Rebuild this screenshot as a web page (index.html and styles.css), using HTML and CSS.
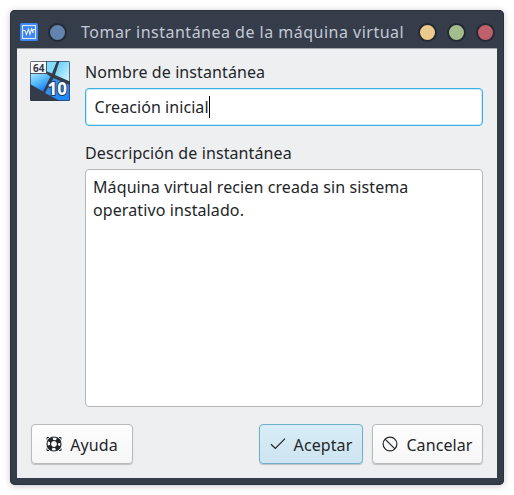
FILE: index.html
```html
<!DOCTYPE html>
<html lang="es">
<head>
<meta charset="utf-8">
<title>Tomar instantánea de la máquina virtual</title>
<link rel="stylesheet" href="styles.css">
</head>
<body>
<div class="window">
  <header class="titlebar">
    <svg class="app-icon" width="18" height="18" viewBox="0 0 18 18">
      <rect width="18" height="18" rx="1.5" fill="#3b84f2"/>
      <rect x="2.5" y="2.5" width="13" height="13" fill="none" stroke="#d5e6ff" stroke-width="1.2"/>
      <path d="M3 7.500h2l1.500 4L8.500 6l1.500 5.500L11.500 6l1.500 4V6.500h2" fill="none" stroke="#e4efff" stroke-width="1.100"/>
    </svg>
    <span class="dot blue"></span>
    <h1 class="title">Tomar instantánea de la máquina virtual</h1>
    <div class="controls">
      <span class="dot yellow"></span>
      <span class="dot green"></span>
      <span class="dot red"></span>
    </div>
  </header>
  <main class="content">
    <div class="form">
      <svg class="os-icon" width="40" height="40" viewBox="0 0 40 40">
        <defs>
          <linearGradient id="sky" x1="0" y1="0" x2=".6" y2="1">
            <stop offset="0" stop-color="#b4ecff"/>
            <stop offset=".5" stop-color="#59bdf8"/>
            <stop offset="1" stop-color="#187df5"/>
          </linearGradient>
          <linearGradient id="pane" x1="0" y1="0" x2="1" y2="1">
            <stop offset="0" stop-color="#58c6f8"/>
            <stop offset="1" stop-color="#d6faff"/>
          </linearGradient>
          <linearGradient id="deep" x1="0" y1="0" x2="1" y2="1">
            <stop offset="0" stop-color="#3f95e6"/>
            <stop offset="1" stop-color="#1685ff"/>
          </linearGradient>
          <clipPath id="tile"><rect width="40" height="40" rx="1.500"/></clipPath>
        </defs>
        <g clip-path="url(#tile)">
          <rect width="40" height="40" fill="#343b49"/>
          <path d="M0 12h15l5.500 3.500L13 30.500 0 23z" fill="url(#sky)"/>
          <path d="M16 0h11l-5 12.500-6-2.500z" fill="#82dcfc"/>
          <path d="M29.500 0H40v20.500l-15-6.500z" fill="url(#pane)"/>
          <path d="M23.500 17L40 24v16H30L15 32z" fill="url(#deep)"/>
          <rect width="16" height="12.500" fill="#fafafa"/>
          <path d="M0 12.500h16.500V0" fill="none" stroke="#4b5563"/>
          <rect x=".5" y=".5" width="39" height="39" rx="1" fill="none" stroke="#303846" stroke-opacity=".7"/>
        </g>
        <text class="bits" x="3" y="10.500">64</text>
        <text class="version" x="17.500" y="33.500">10</text>
      </svg>
      <div class="fields">
        <label class="label" for="name">Nombre de instantánea</label>
        <div class="input" id="name">Creación inicial<span class="caret"></span></div>
        <label class="label second" for="desc">Descripción de instantánea</label>
        <div class="textarea" id="desc">Máquina virtual recien creada sin sistema<br>operativo instalado.</div>
      </div>
    </div>
    <footer class="actions">
      <button class="button help">
        <svg width="16" height="16" viewBox="0 0 16 16" fill="none" stroke="#232629">
          <circle cx="8" cy="8" r="5.200" stroke-width="4" stroke-dasharray="4.600 3.568" stroke-dashoffset="-1.784"/>
          <circle cx="8" cy="8" r="7" stroke-width="1.200"/>
          <circle cx="8" cy="8" r="3.500" stroke-width="1.200"/>
          <path d="M1 3.500V1.500h2M13 1.500h2v2M1 12.500v2h2M13 14.500h2v-2"/>
        </svg>
        <span>Ayuda</span>
      </button>
      <button class="button accept">
        <svg width="16" height="16" viewBox="0 0 16 16" fill="none" stroke="#232629" stroke-width="1.200">
          <path d="M1 8.300l4.300 4.200L15 2.700"/>
        </svg>
        <span>Aceptar</span>
      </button>
      <button class="button cancel">
        <svg width="16" height="16" viewBox="0 0 16 16" fill="none" stroke="#232629" stroke-width="1.200">
          <circle cx="8" cy="8" r="6.900"/>
          <path d="M3.100 3.100l9.800 9.800"/>
        </svg>
        <span>Cancelar</span>
      </button>
    </footer>
  </main>
</div>
</body>
</html>
```
FILE: styles.css
```css
* { box-sizing: border-box; }

body {
  margin: 0;
  padding: 10px;
  height: 495px;
  background: #fff;
  color: #232629;
  font: 16px/23px "Noto Sans", sans-serif;
  letter-spacing: .1px;
}

.window {
  display: flex;
  flex-direction: column;
  width: 494px;
  height: 475px;
  padding: 0 7px 7px;
  background: #353c4a;
  border-radius: 5px;
  box-shadow: inset 0 0 0 1px #2b313e, 0 1px 7px rgba(0, 0, 0, .22);
}

.titlebar {
  display: flex;
  align-items: center;
  height: 38px;
  padding: 6px 2px 0 3px;
}

.app-icon { flex: none; }

.dot {
  flex: none;
  width: 19px;
  height: 19px;
  border: 2px solid #252a34;
  border-radius: 50%;
}

.blue { margin-left: 10px; background: #6083b0; }
.yellow { background: #ebcb8b; }
.green { background: #a3be8c; }
.red { background: #bf616a; }

.title {
  margin: 0 0 0 14px;
  color: #c3c9d5;
  font-size: 16px;
  font-weight: 400;
  letter-spacing: .49px;
  white-space: nowrap;
}

.controls {
  display: flex;
  gap: 10px;
  margin-left: auto;
}

.content {
  flex: 1;
  display: flex;
  flex-direction: column;
  padding: 12px 14px 14px 13px;
  background: #eeeff1;
  border-top: 1px solid #a5a4aa;
}

.form {
  flex: 1;
  display: flex;
  gap: 15px;
}

.os-icon { flex: none; }

.bits { font: 700 10px "Noto Sans", sans-serif; letter-spacing: 0; fill: #343b49; }

.version {
  font: 700 17px "Noto Sans", sans-serif;
  letter-spacing: 0;
  fill: #fff;
  stroke: #223c63;
  stroke-width: 2px;
  paint-order: stroke;
}

.fields {
  flex: 1;
  display: flex;
  flex-direction: column;
}

.label { height: 27px; line-height: 23px; }
.second { margin-top: 16px; }

.input {
  display: flex;
  align-items: center;
  height: 38px;
  padding: 0 8.5px;
  background: #fff;
  border: 1px solid #3daee9;
  border-radius: 4px;
  box-shadow: inset 0 0 0 1px #c9eaf9;
  letter-spacing: .07px;
}

.caret { width: 1px; height: 22px; background: #000; }

.textarea {
  height: 238px;
  padding: 6px 7px;
  background: #fff;
  border: 1px solid #b4b6b8;
  border-radius: 4px;
}

.actions {
  display: flex;
  gap: 9px;
  padding-left: 1px;
}

.button {
  display: flex;
  align-items: center;
  justify-content: center;
  gap: 8px;
  height: 40px;
  padding: 1px 0 0;
  color: inherit;
  font: inherit;
  letter-spacing: inherit;
  background: linear-gradient(#fdfdfd, #f6f6f7);
  border: 1px solid #b8babc;
  border-radius: 4px;
  box-shadow: 0 1px 1px rgba(0, 0, 0, .2);
}

.button svg { margin-bottom: 2px; }
.button span { padding-top: 1px; }

.help { width: 102px; margin-right: auto; }

.accept {
  width: 104px;
  background: linear-gradient(#d8edf7, #cde5f1);
  border-color: #70aeca;
}

.cancel { width: 111px; }
```
